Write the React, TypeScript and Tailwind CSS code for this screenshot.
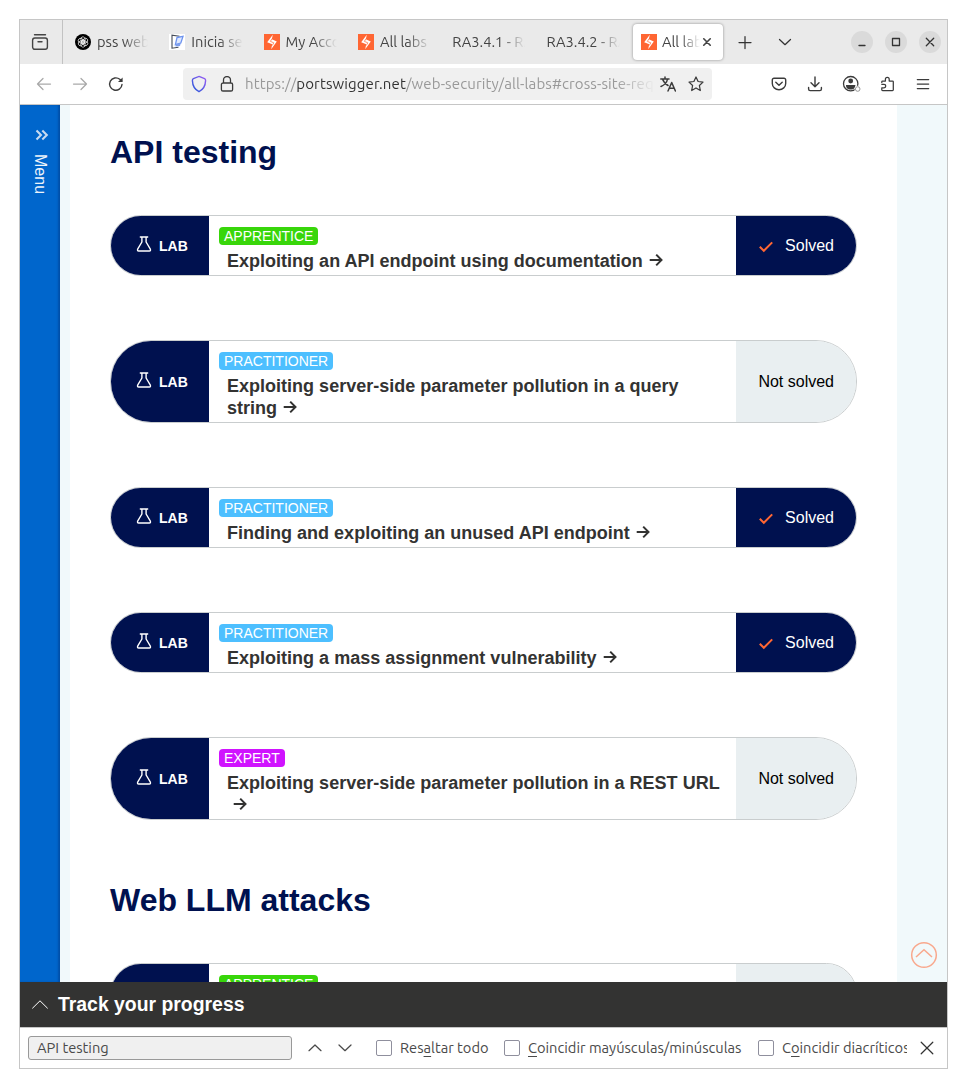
import type { ReactNode } from 'react';

const UI = "font-['Ubuntu','Noto_Sans',sans-serif]";
const FADE = '[mask-image:linear-gradient(to_right,black_calc(100%-24px),transparent)]';

function Burp() {
  return (
    <svg width="16" height="16" viewBox="0 0 16 16" className="shrink-0">
      <rect width="16" height="16" fill="#ff6633" />
      <path d="M8.8 0.8 L7.8 5.2 L12.8 7.6 L7.2 15.2 L8.2 10.3 L3.2 8.3 Z" fill="#fff" />
      <path d="M8 4.6 L6.4 7.4 L9.8 8.8 L8.2 11.6" fill="none" stroke="#ff6633" strokeWidth="0.7" />
    </svg>
  );
}

function Swirl() {
  return (
    <svg width="16" height="16" viewBox="0 0 16 16" className="shrink-0">
      <circle cx="8" cy="8" r="8" fill="#000" />
      <g fill="none" stroke="#fff" strokeWidth="0.7">
        <path d="M8 7.9 L10.2 6.6 V4.9 A2.3 2.3 0 0 0 6 3.9 V8.6 L8 9.8" />
        <path d="M8 7.9 L10.2 6.6 V4.9 A2.3 2.3 0 0 0 6 3.9 V8.6 L8 9.8" transform="rotate(60 8 8)" />
        <path d="M8 7.9 L10.2 6.6 V4.9 A2.3 2.3 0 0 0 6 3.9 V8.6 L8 9.8" transform="rotate(120 8 8)" />
        <path d="M8 7.9 L10.2 6.6 V4.9 A2.3 2.3 0 0 0 6 3.9 V8.6 L8 9.8" transform="rotate(180 8 8)" />
        <path d="M8 7.9 L10.2 6.6 V4.9 A2.3 2.3 0 0 0 6 3.9 V8.6 L8 9.8" transform="rotate(240 8 8)" />
        <path d="M8 7.9 L10.2 6.6 V4.9 A2.3 2.3 0 0 0 6 3.9 V8.6 L8 9.8" transform="rotate(300 8 8)" />
      </g>
    </svg>
  );
}

function Notebook() {
  return (
    <svg width="16" height="16" viewBox="0 0 16 16" className="shrink-0">
      <rect width="16" height="16" fill="#fff" />
      <path d="M10.5 2.2 L3 1.2 V14.2 L9.5 13.2" fill="none" stroke="#444b58" strokeWidth="1.1" />
      <path d="M8 3.5 L14 2.4 L11.8 9 L6.4 10.6 Z" fill="#dfe9ff" stroke="#6d93ee" strokeWidth="1.3" />
      <path d="M6.4 10.6 L11.8 9 L11 12 L6.6 12.4 Z" fill="#7f9fee" />
    </svg>
  );
}

type IconProps = { d: string; size?: number; sw?: number; className?: string; children?: ReactNode };
function Icon({ d, size = 16, sw = 1.25, className = '', children }: IconProps) {
  return (
    <svg width={size} height={size} viewBox="0 0 16 16" fill="none" stroke="currentColor" strokeWidth={sw} strokeLinecap="round" strokeLinejoin="round" className={`shrink-0 ${className}`}>
      <path d={d} />
      {children}
    </svg>
  );
}

function Tab({ icon, label }: { icon?: ReactNode; label: string }) {
  return (
    <div className="flex w-[94.3px] shrink-0 items-center gap-1.5 pr-[13px] pl-2">
      {icon}
      <span className={`min-w-0 flex-1 overflow-hidden whitespace-nowrap ${FADE}`}>{label}</span>
    </div>
  );
}

function TabBar() {
  return (
    <div className="flex h-11 shrink-0 bg-[#eaeaea] text-[14.67px] text-[#444]">
      <div className="flex w-[43px] shrink-0 items-center justify-center border-r border-[#c2c2c2] pr-0.5 text-[#444]">
        <svg width="18" height="18" viewBox="0 0 18 18" fill="none" stroke="currentColor" strokeWidth="1.4" strokeLinecap="round">
          <path d="M3.5 1.8 H14.5" />
          <rect x="1.6" y="5" width="14.8" height="11.3" rx="2.2" />
          <path d="M7 8.8 H11" />
        </svg>
      </div>
      <div className="flex w-[570px] shrink-0 pl-1">
        <Tab icon={<Swirl />} label="pss web security" />
        <Tab icon={<Notebook />} label="Inicia sesión" />
        <Tab icon={<Burp />} label="My Account" />
        <Tab icon={<Burp />} label="All labs | Web" />
        <Tab label="RA3.4.1 - RA3" />
        <Tab label="RA3.4.2 - RA3" />
      </div>
      <div className="mt-1 flex h-9 w-[90px] shrink-0 items-center rounded bg-white pl-2 shadow-[0_0_3px_rgba(0,0,0,0.4)]">
        <Burp />
        <span className="ml-[5px] w-[38px] overflow-hidden whitespace-nowrap [mask-image:linear-gradient(to_right,black_50%,transparent)]">All labs</span>
        <Icon d="M4.3 4.3 L11.7 11.7 M11.7 4.3 L4.3 11.7" size={14} sw={1.9} />
      </div>
      <div className="flex w-[128px] shrink-0 items-center gap-6 pl-[14px] text-[#333]">
        <Icon d="M2 8.5 H14 M8 2.5 V14.5" />
        <Icon d="M2.5 5.5 L8 10.7 L13.5 5.5" />
      </div>
      <div className="flex items-center gap-3 text-[#333]">
        <WinButton d="M5 11.5 H11" />
        <WinButton d="M4.5 4.5 H11.5 V11.5 H4.5 Z" />
        <WinButton d="M4.3 4.3 L11.7 11.7 M11.7 4.3 L4.3 11.7" />
      </div>
    </div>
  );
}

function WinButton({ d }: { d: string }) {
  return (
    <span className="flex size-[22px] items-center justify-center rounded-full bg-[#dadada]">
      <Icon d={d} size={16} sw={1.3} />
    </span>
  );
}

function Toolbar() {
  return (
    <div className="flex h-[41px] shrink-0 items-center border-b border-[#c6c6c6] bg-white text-[#3b3b3b]">
      <div className="flex w-[163px] shrink-0 items-center gap-5 pl-4">
        <Icon d="M14.5 8 H1.5 M7 2.5 L1.5 8 L7 13.5" className="text-[#a9a9a9]" />
        <Icon d="M1.5 8 H14.5 M9 2.5 L14.5 8 L9 13.5" className="text-[#a9a9a9]" />
        <Icon d="M14 8.5 A6.2 6.2 0 1 1 11.8 3.3 L13.5 4.8" sw={1.4}>
          <path d="M14.6 1.4 V6 H10 Z" fill="currentColor" stroke="none" />
        </Icon>
      </div>
      <div className="flex h-8 w-[529px] shrink-0 items-center rounded bg-[#f0f0f0] pl-2">
        <svg width="16" height="18" viewBox="0 0 16 18" fill="none" className="shrink-0">
          <defs>
            <linearGradient id="shield" x1="0" y1="1" x2="1" y2="0">
              <stop offset="0" stopColor="#2458d8" />
              <stop offset="1" stopColor="#9a5cf4" />
            </linearGradient>
          </defs>
          <path d="M8 1.4 L13.6 3.6 Q14.7 4.1 14.6 5.6 C14.4 10.8 12 14.6 8 16.6 C4 14.6 1.6 10.8 1.4 5.6 Q1.3 4.1 2.4 3.6 Z" stroke="url(#shield)" strokeWidth="1.4" />
        </svg>
        <Icon d="M4.5 7 V4 a3.5 3.5 0 0 1 7 0 V7 M4 7 h8 a1.6 1.6 0 0 1 1.6 1.6 v4.8 a1.6 1.6 0 0 1 -1.6 1.6 h-8 a1.6 1.6 0 0 1 -1.6 -1.6 v-4.8 a1.6 1.6 0 0 1 1.6 -1.6 Z" className="ml-3" sw={1.3} />
        <span className="ml-2.5 w-[410px] overflow-hidden text-[15px] tracking-[0.12px] whitespace-nowrap text-[#999] [mask-image:linear-gradient(to_right,black_calc(100%-40px),transparent)]">
          https://<span className="text-[#333]">portswigger.net</span>/web-security/all-labs#cross-site-request
        </span>
        <Icon d="M0.8 3 H9 M5 1 V3 M7.5 3 C7 6 4.5 9 1 10.5 M2.5 3 C3.5 6 5.5 8 8 9.5 M8 15 L11.7 6.5 L15.4 15 M9.2 12.3 H14.2" className="ml-[5px]" sw={1.5} />
        <Icon d="M8 1 L10.1 5.5 L15 6.1 L11.4 9.5 L12.3 14.5 L8 12 L3.7 14.5 L4.6 9.5 L1 6.1 L5.9 5.5 Z" className="ml-3" />
      </div>
      <div className="flex flex-1 items-center pl-[59px]">
        <Icon d="M3 2.3 h10 a1.7 1.7 0 0 1 1.7 1.7 v3.5 a6.7 6.2 0 0 1 -13.4 0 V4 A1.7 1.7 0 0 1 3 2.3 Z M4.8 6.2 L8 9.3 L11.2 6.2" sw={1.4} />
        <Icon d="M8 1 V10.7 M4 6.8 L8 10.7 L12 6.8 M1.6 11.5 V13 a1.6 1.6 0 0 0 1.6 1.6 h9.6 a1.6 1.6 0 0 0 1.6 -1.6 V11.5" className="ml-5" sw={1.4} />
        <svg width="20" height="18" viewBox="0 0 20 18" fill="none" className="ml-[19px] shrink-0">
          <circle cx="8.7" cy="8.7" r="7.2" stroke="#3b3b3b" strokeWidth="1.3" />
          <circle cx="8.7" cy="6" r="2.4" fill="#3b3b3b" />
          <path d="M4 10 h9.4 c0 3.3 -2 4.6 -4.7 4.6 s-4.7 -1.3 -4.7 -4.6 Z" fill="#3b3b3b" />
          <circle cx="15.7" cy="14" r="3.2" fill="#fff" />
          <circle cx="15.7" cy="14" r="2.3" stroke="#999" />
        </svg>
        <Icon d="M1.8 6.5 V5.8 a0.8 0.8 0 0 1 0.8 -0.8 H5.4 V3.2 a1.9 1.9 0 0 1 3.8 0 V5 H12.5 a0.8 0.8 0 0 1 0.8 0.8 V13.7 a0.8 0.8 0 0 1 -0.8 0.8 H2.6 a0.8 0.8 0 0 1 -0.8 -0.8 V11.8 H4 a1.7 1.7 0 0 0 0 -3.5 H1.8" className="ml-[18px]" />
        <Icon d="M2.3 3.5 H13.7 M2.3 8 H13.7 M2.3 12.5 H13.7" className="ml-[19px]" />
      </div>
    </div>
  );
}

const LEVELS = {
  APPRENTICE: 'bg-[#38d60a]',
  PRACTITIONER: 'bg-[#4dbfff]',
  EXPERT: 'bg-[#d013ff]',
};

type LabProps = { level: keyof typeof LEVELS; title: string; solved?: boolean };

function Lab({ level, title, solved }: LabProps) {
  return (
    <div className="flex w-[747px] shrink-0 overflow-hidden rounded-[41px] border border-[#c9cdce] bg-white">
      <div className="flex w-[98px] shrink-0 items-center bg-[#00114f] pl-[25px] text-[14px] font-bold text-white">
        <svg width="16" height="18" viewBox="0 0 16 18" fill="none" stroke="currentColor" strokeWidth="1.4" strokeLinejoin="round" className="mr-[7px] mb-[3px]">
          <path d="M3.8 2 H12.2 M5.9 2 V7 L1.8 13.8 Q0.9 15.9 2.7 16 H13.3 Q15.1 15.9 14.2 13.8 L10.1 7 V2" />
        </svg>
        <span className="pt-px">LAB</span>
      </div>
      <div className="flex w-[527px] shrink-0 flex-col items-start px-2.5 pt-[11px]">
        <span className={`h-[18px] rounded px-[5px] text-[14px] leading-[18px] text-white ${LEVELS[level]}`}>{level}</span>
        <div className="mt-[5px] pb-[3px] pl-2 text-[18px] leading-[22px] font-bold tracking-[0.01px] text-[#333332]">
          {title}
          <svg width="14" height="14" viewBox="0 0 14 14" fill="none" stroke="currentColor" strokeWidth="2" className="mb-1 ml-1.5 inline-block">
            <path d="M0.7 7 H12.4 M7.2 1.6 L12.5 7 L7.2 12.4" />
          </svg>
        </div>
      </div>
      <div className={`flex flex-1 items-center justify-end pr-[22px] text-[16px] ${solved ? 'bg-[#00114f] text-white' : 'bg-[#e9eff1] text-black'}`}>
        {solved && (
          <svg width="14" height="12" viewBox="0 0 14 12" fill="none" stroke="#ff6633" strokeWidth="2" className="mt-0.5 mr-3">
            <path d="M0.8 5.8 L4.8 9.8 L13.2 1.4" />
          </svg>
        )}
        {solved ? 'Solved' : 'Not solved'}
      </div>
    </div>
  );
}

function Page() {
  return (
    <div className="flex h-[877px] shrink-0 overflow-hidden bg-[#f1f9fb] font-['Liberation_Sans',Arial,sans-serif]">
      <div className="z-10 flex w-10 shrink-0 flex-col items-center bg-[#0066cc] pt-6 shadow-[inset_-2px_0_2px_rgba(0,30,90,0.3)]">
        <svg width="14" height="12" viewBox="0 0 14 12" fill="none" stroke="#c9dbf0" strokeWidth="2.1" className="ml-1">
          <path d="M1.5 1.5 L6 6 L1.5 10.5 M7.3 1.5 L11.8 6 L7.3 10.5" />
        </svg>
        <span className="mt-[13px] text-[16px] leading-5 text-[#eef4fb] [writing-mode:vertical-rl]">Menu</span>
      </div>
      <div className="ml-2.5 flex w-[827px] shrink-0 flex-col bg-white pl-10">
        <h1 className="mt-[27px] mb-[43px] text-[32px] leading-10 font-bold text-[#00114f]">API testing</h1>
        <div className="flex flex-col gap-16">
          <Lab level="APPRENTICE" title="Exploiting an API endpoint using documentation" solved />
          <Lab level="PRACTITIONER" title="Exploiting server-side parameter pollution in a query string" />
          <Lab level="PRACTITIONER" title="Finding and exploiting an unused API endpoint" solved />
          <Lab level="PRACTITIONER" title="Exploiting a mass assignment vulnerability" solved />
          <Lab level="EXPERT" title="Exploiting server-side parameter pollution in a REST URL" />
        </div>
        <h1 className="mt-[60px] mb-[43px] text-[32px] leading-10 font-bold text-[#00114f]">Web LLM attacks</h1>
        <Lab level="APPRENTICE" title="Exploiting LLM APIs with excessive agency" />
      </div>
      <div className="flex flex-1 items-end justify-center pb-[13px] pl-1">
        <svg width="28" height="28" viewBox="0 0 28 28" fill="none" stroke="#ff6633" strokeOpacity="0.55" strokeWidth="1.5">
          <circle cx="14" cy="14" r="12.3" />
          <path d="M6 16 L14 8.8 L22 16" />
        </svg>
      </div>
    </div>
  );
}

function Check({ width, gap, children }: { width: string; gap: string; children: ReactNode }) {
  return (
    <label className={`flex shrink-0 items-center ${gap}`}>
      <span className="size-4 shrink-0 rounded-[2px] border border-[#8f8f9d] bg-white" />
      <span className={`ml-2 overflow-hidden whitespace-nowrap ${width}`}>{children}</span>
    </label>
  );
}

function FindBar() {
  const key = 'underline underline-offset-[3px]';
  return (
    <div className="flex h-[41px] shrink-0 items-center border-t border-[#c6c6c6] bg-white pl-2 text-[14.67px] text-[#4a4a4a]">
      <div className="flex h-6 w-[264px] shrink-0 items-center rounded-[3px] border border-[#999] bg-[#f0f0f0] pl-2">API testing</div>
      <Icon d="M2 10.7 L8 5 L14 10.7" className="ml-[15px]" />
      <Icon d="M2 5 L8 10.7 L14 5" className="ml-3.5" />
      <Check width="w-[89px]" gap="ml-[23px]">Res<span className={key}>a</span>ltar todo</Check>
      <Check width="w-[215px]" gap="ml-[15px]"><span className={key}>C</span>oincidir mayúsculas/minúsculas</Check>
      <Check width="w-[125px]" gap="ml-[15px]">C<span className={key}>o</span>incidir diacríticos</Check>
      <Icon d="M2.2 2.2 L13.8 13.8 M13.8 2.2 L2.2 13.8" className="ml-3 text-[#333]" />
    </div>
  );
}

export default function App() {
  return (
    <div className="h-[1088px] w-[967px] bg-white p-[19px]">
      <div className={`flex h-[1050px] w-[929px] flex-col overflow-hidden border border-[#c6c6c6] ${UI}`}>
        <TabBar />
        <Toolbar />
        <Page />
        <div className="flex h-[45px] shrink-0 items-center bg-[#333332] pl-3 font-['Liberation_Sans',Arial,sans-serif] text-[19.4px] font-bold text-white">
          <svg width="16" height="9" viewBox="0 0 16 9" fill="none" stroke="currentColor" strokeWidth="1" className="mr-2.5">
            <path d="M0.3 8.4 L8 0.8 L15.7 8.4" />
          </svg>
          <span className="pt-px">Track your progress</span>
        </div>
        <FindBar />
      </div>
    </div>
  );
}
